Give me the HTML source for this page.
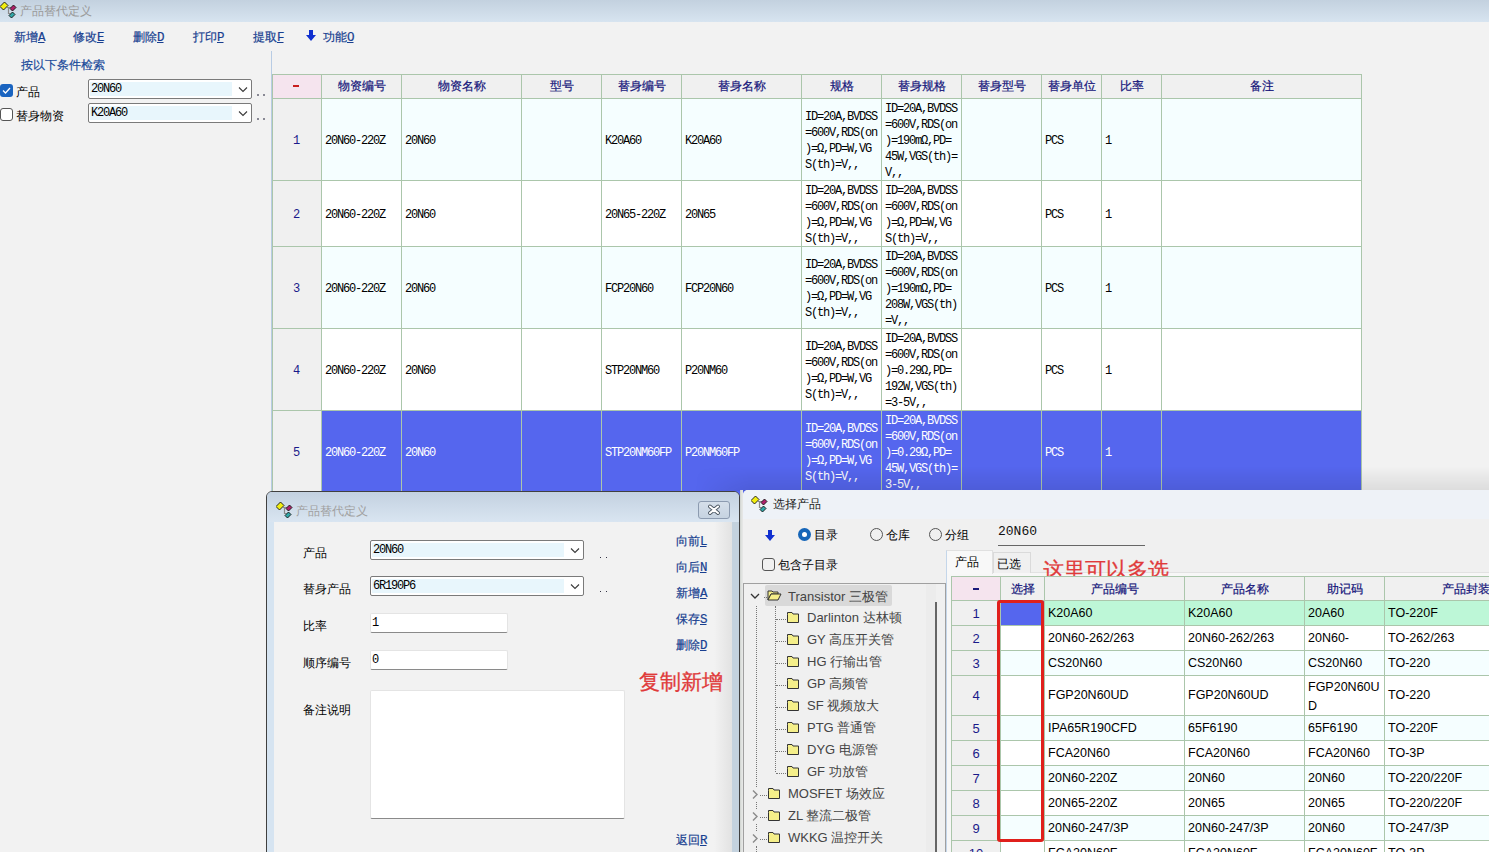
<!DOCTYPE html><html><head><meta charset="utf-8"><style>
html,body{margin:0;padding:0;}body{width:1489px;height:852px;overflow:hidden;position:relative;background:#f2f2f2;font-family:"Liberation Sans",sans-serif;font-size:12px;}
div{box-sizing:border-box;}
.m{font-family:"Liberation Mono",monospace;font-size:12px;letter-spacing:-1.2px;line-height:16px;color:#000;}
.u{text-decoration:underline;font-family:"Liberation Mono",monospace;font-size:12.5px;letter-spacing:-1px;}.lk{-webkit-text-stroke:0.25px;}i{font-style:normal;display:inline-block;width:1em;text-align:center;}
</style></head><body>
<div style="position:absolute;left:0px;top:0px;width:1489px;height:22px;background:linear-gradient(#c3d1df,#d7e4f0);"></div>
<svg style="position:absolute;left:0px;top:0px" width="17" height="19" viewBox="0 0 17 19">
<path d="M7 7.5 H11 M8.5 7.5 V13.5 H10.5" stroke="#8a8a8a" stroke-width="1.2" fill="none"/>
<polygon points="4.5,2 8,5.5 3.5,10 0,6.5" fill="#f2ee10" stroke="#111" stroke-width="0.9"/>
<polygon points="13.5,5 16,7.5 12.5,11 10,8.5" fill="#b0206a" stroke="#111" stroke-width="0.9"/>
<polygon points="12.5,12 15,14.5 11.5,18 9,15.5" fill="#30a8a8" stroke="#111" stroke-width="0.9"/>
</svg>
<div style="position:absolute;left:20px;top:3px;white-space:nowrap;font-size:12px;color:#9a9a9a;"><i>产</i><i>品</i><i>替</i><i>代</i><i>定</i><i>义</i></div>
<div style="position:absolute;left:14px;top:29px;white-space:nowrap;font-size:12px;color:#183f90;-webkit-text-stroke:0.2px;"><i>新</i><i>增</i><span class="u">A</span></div>
<div style="position:absolute;left:73px;top:29px;white-space:nowrap;font-size:12px;color:#183f90;-webkit-text-stroke:0.2px;"><i>修</i><i>改</i><span class="u">E</span></div>
<div style="position:absolute;left:133px;top:29px;white-space:nowrap;font-size:12px;color:#183f90;-webkit-text-stroke:0.2px;"><i>删</i><i>除</i><span class="u">D</span></div>
<div style="position:absolute;left:193px;top:29px;white-space:nowrap;font-size:12px;color:#183f90;-webkit-text-stroke:0.2px;"><i>打</i><i>印</i><span class="u">P</span></div>
<div style="position:absolute;left:253px;top:29px;white-space:nowrap;font-size:12px;color:#183f90;-webkit-text-stroke:0.2px;"><i>提</i><i>取</i><span class="u">F</span></div>
<div style="position:absolute;left:323px;top:29px;white-space:nowrap;font-size:12px;color:#183f90;-webkit-text-stroke:0.2px;"><i>功</i><i>能</i><span class="u">O</span></div>
<svg style="position:absolute;left:305px;top:29px" width="12" height="13" viewBox="0 0 12 13"><path d="M4 1 H8 V6 H11 L6 12 L1 6 H4 Z" fill="#1030d0"/></svg>
<div style="position:absolute;left:21px;top:57px;white-space:nowrap;font-size:12px;color:#1a4a9a;-webkit-text-stroke:0.2px;"><i>按</i><i>以</i><i>下</i><i>条</i><i>件</i><i>检</i><i>索</i></div>
<div style="position:absolute;left:0px;top:84px;width:13px;height:13px;background:#1a64c0;border-radius:3px;"></div>
<svg style="position:absolute;left:0px;top:84px" width="13" height="13" viewBox="0 0 13 13"><path d="M3 6.5 L5.5 9 L10 4" stroke="#fff" stroke-width="1.3" fill="none"/></svg>
<div style="position:absolute;left:16px;top:84px;white-space:nowrap;font-size:12px;color:#000;"><i>产</i><i>品</i></div>
<div style="position:absolute;left:0px;top:108px;width:13px;height:13px;border:1px solid #555;border-radius:3px;background:#fff;"></div>
<div style="position:absolute;left:16px;top:108px;white-space:nowrap;font-size:12px;color:#000;"><i>替</i><i>身</i><i>物</i><i>资</i></div>
<div style="position:absolute;left:88px;top:79px;width:164px;height:20px;background:#fff;border:1px solid #7a7a7a;border-radius:2px;"></div>
<div style="position:absolute;left:90px;top:82px;width:142px;height:14px;background:#e8f6fc;"></div>
<div style="position:absolute;left:91px;top:81px;white-space:nowrap;font-family:'Liberation Mono', monospace;font-size:12px;letter-spacing:-1.2px;line-height:16px;color:#000;">20N60</div>
<svg style="position:absolute;left:238px;top:86px" width="10" height="7" viewBox="0 0 10 7"><path d="M1 1.5 L5 5.5 L9 1.5" stroke="#3a3a3a" stroke-width="1.1" fill="none"/></svg>
<div style="position:absolute;left:88px;top:103px;width:164px;height:20px;background:#fff;border:1px solid #7a7a7a;border-radius:2px;"></div>
<div style="position:absolute;left:90px;top:106px;width:142px;height:14px;background:#e8f6fc;"></div>
<div style="position:absolute;left:91px;top:105px;white-space:nowrap;font-family:'Liberation Mono', monospace;font-size:12px;letter-spacing:-1.2px;line-height:16px;color:#000;">K20A60</div>
<svg style="position:absolute;left:238px;top:110px" width="10" height="7" viewBox="0 0 10 7"><path d="M1 1.5 L5 5.5 L9 1.5" stroke="#3a3a3a" stroke-width="1.1" fill="none"/></svg>
<div style="position:absolute;left:257px;top:94px;width:2px;height:2px;background:#445;border-radius:1px;opacity:.8"></div>
<div style="position:absolute;left:263px;top:94px;width:2px;height:2px;background:#445;border-radius:1px;opacity:.8"></div>
<div style="position:absolute;left:257px;top:118px;width:2px;height:2px;background:#445;border-radius:1px;opacity:.8"></div>
<div style="position:absolute;left:263px;top:118px;width:2px;height:2px;background:#445;border-radius:1px;opacity:.8"></div>
<div style="position:absolute;left:271px;top:51px;width:1px;height:801px;background:#b8cce4;"></div>
<div style="position:absolute;left:272px;top:74px;width:1090px;height:446px;background:#abc6ab;"></div>
<div style="position:absolute;left:273px;top:75px;width:48px;height:23px;background:#f5e4ee;color:#cc2020;text-align:center;line-height:23px;font-size:12px;-webkit-text-stroke:0.2px;"><div style="position:absolute;left:20px;top:10px;width:6px;height:2px;background:#c81e1e;"></div></div>
<div style="position:absolute;left:273px;top:99px;width:48px;height:81px;background:#f0f0f0;overflow:hidden;"><div style="position:absolute;left:0;right:0;top:34px;text-align:center;font-family:'Liberation Mono', monospace;font-size:12px;line-height:16px;color:#1a1a8a;padding-right:1px;">1</div></div>
<div style="position:absolute;left:273px;top:181px;width:48px;height:65px;background:#f0f0f0;overflow:hidden;"><div style="position:absolute;left:0;right:0;top:26px;text-align:center;font-family:'Liberation Mono', monospace;font-size:12px;line-height:16px;color:#1a1a8a;padding-right:1px;">2</div></div>
<div style="position:absolute;left:273px;top:247px;width:48px;height:81px;background:#f0f0f0;overflow:hidden;"><div style="position:absolute;left:0;right:0;top:34px;text-align:center;font-family:'Liberation Mono', monospace;font-size:12px;line-height:16px;color:#1a1a8a;padding-right:1px;">3</div></div>
<div style="position:absolute;left:273px;top:329px;width:48px;height:81px;background:#f0f0f0;overflow:hidden;"><div style="position:absolute;left:0;right:0;top:34px;text-align:center;font-family:'Liberation Mono', monospace;font-size:12px;line-height:16px;color:#1a1a8a;padding-right:1px;">4</div></div>
<div style="position:absolute;left:273px;top:411px;width:48px;height:109px;background:#f0f0f0;overflow:hidden;"><div style="position:absolute;left:0;right:0;top:34px;text-align:center;font-family:'Liberation Mono', monospace;font-size:12px;line-height:16px;color:#1a1a8a;padding-right:1px;">5</div></div>
<div style="position:absolute;left:322px;top:75px;width:79px;height:23px;background:#f0f0f0;color:#14147a;text-align:center;line-height:23px;font-size:12px;-webkit-text-stroke:0.2px;"><i>物</i><i>资</i><i>编</i><i>号</i></div>
<div style="position:absolute;left:322px;top:99px;width:79px;height:81px;background:#f5feff;overflow:hidden;"><div class="m" style="position:absolute;left:3px;top:34px;color:#000;">20N60-220Z</div></div>
<div style="position:absolute;left:322px;top:181px;width:79px;height:65px;background:#ffffff;overflow:hidden;"><div class="m" style="position:absolute;left:3px;top:26px;color:#000;">20N60-220Z</div></div>
<div style="position:absolute;left:322px;top:247px;width:79px;height:81px;background:#f5feff;overflow:hidden;"><div class="m" style="position:absolute;left:3px;top:34px;color:#000;">20N60-220Z</div></div>
<div style="position:absolute;left:322px;top:329px;width:79px;height:81px;background:#ffffff;overflow:hidden;"><div class="m" style="position:absolute;left:3px;top:34px;color:#000;">20N60-220Z</div></div>
<div style="position:absolute;left:322px;top:411px;width:79px;height:109px;background:#5566ee;overflow:hidden;"><div class="m" style="position:absolute;left:3px;top:34px;color:#ffffff;">20N60-220Z</div></div>
<div style="position:absolute;left:402px;top:75px;width:119px;height:23px;background:#f0f0f0;color:#14147a;text-align:center;line-height:23px;font-size:12px;-webkit-text-stroke:0.2px;"><i>物</i><i>资</i><i>名</i><i>称</i></div>
<div style="position:absolute;left:402px;top:99px;width:119px;height:81px;background:#f5feff;overflow:hidden;"><div class="m" style="position:absolute;left:3px;top:34px;color:#000;">20N60</div></div>
<div style="position:absolute;left:402px;top:181px;width:119px;height:65px;background:#ffffff;overflow:hidden;"><div class="m" style="position:absolute;left:3px;top:26px;color:#000;">20N60</div></div>
<div style="position:absolute;left:402px;top:247px;width:119px;height:81px;background:#f5feff;overflow:hidden;"><div class="m" style="position:absolute;left:3px;top:34px;color:#000;">20N60</div></div>
<div style="position:absolute;left:402px;top:329px;width:119px;height:81px;background:#ffffff;overflow:hidden;"><div class="m" style="position:absolute;left:3px;top:34px;color:#000;">20N60</div></div>
<div style="position:absolute;left:402px;top:411px;width:119px;height:109px;background:#5566ee;overflow:hidden;"><div class="m" style="position:absolute;left:3px;top:34px;color:#ffffff;">20N60</div></div>
<div style="position:absolute;left:522px;top:75px;width:79px;height:23px;background:#f0f0f0;color:#14147a;text-align:center;line-height:23px;font-size:12px;-webkit-text-stroke:0.2px;"><i>型</i><i>号</i></div>
<div style="position:absolute;left:522px;top:99px;width:79px;height:81px;background:#f5feff;overflow:hidden;"></div>
<div style="position:absolute;left:522px;top:181px;width:79px;height:65px;background:#ffffff;overflow:hidden;"></div>
<div style="position:absolute;left:522px;top:247px;width:79px;height:81px;background:#f5feff;overflow:hidden;"></div>
<div style="position:absolute;left:522px;top:329px;width:79px;height:81px;background:#ffffff;overflow:hidden;"></div>
<div style="position:absolute;left:522px;top:411px;width:79px;height:109px;background:#5566ee;overflow:hidden;"></div>
<div style="position:absolute;left:602px;top:75px;width:79px;height:23px;background:#f0f0f0;color:#14147a;text-align:center;line-height:23px;font-size:12px;-webkit-text-stroke:0.2px;"><i>替</i><i>身</i><i>编</i><i>号</i></div>
<div style="position:absolute;left:602px;top:99px;width:79px;height:81px;background:#f5feff;overflow:hidden;"><div class="m" style="position:absolute;left:3px;top:34px;color:#000;">K20A60</div></div>
<div style="position:absolute;left:602px;top:181px;width:79px;height:65px;background:#ffffff;overflow:hidden;"><div class="m" style="position:absolute;left:3px;top:26px;color:#000;">20N65-220Z</div></div>
<div style="position:absolute;left:602px;top:247px;width:79px;height:81px;background:#f5feff;overflow:hidden;"><div class="m" style="position:absolute;left:3px;top:34px;color:#000;">FCP20N60</div></div>
<div style="position:absolute;left:602px;top:329px;width:79px;height:81px;background:#ffffff;overflow:hidden;"><div class="m" style="position:absolute;left:3px;top:34px;color:#000;">STP20NM60</div></div>
<div style="position:absolute;left:602px;top:411px;width:79px;height:109px;background:#5566ee;overflow:hidden;"><div class="m" style="position:absolute;left:3px;top:34px;color:#ffffff;">STP20NM60FP</div></div>
<div style="position:absolute;left:682px;top:75px;width:119px;height:23px;background:#f0f0f0;color:#14147a;text-align:center;line-height:23px;font-size:12px;-webkit-text-stroke:0.2px;"><i>替</i><i>身</i><i>名</i><i>称</i></div>
<div style="position:absolute;left:682px;top:99px;width:119px;height:81px;background:#f5feff;overflow:hidden;"><div class="m" style="position:absolute;left:3px;top:34px;color:#000;">K20A60</div></div>
<div style="position:absolute;left:682px;top:181px;width:119px;height:65px;background:#ffffff;overflow:hidden;"><div class="m" style="position:absolute;left:3px;top:26px;color:#000;">20N65</div></div>
<div style="position:absolute;left:682px;top:247px;width:119px;height:81px;background:#f5feff;overflow:hidden;"><div class="m" style="position:absolute;left:3px;top:34px;color:#000;">FCP20N60</div></div>
<div style="position:absolute;left:682px;top:329px;width:119px;height:81px;background:#ffffff;overflow:hidden;"><div class="m" style="position:absolute;left:3px;top:34px;color:#000;">P20NM60</div></div>
<div style="position:absolute;left:682px;top:411px;width:119px;height:109px;background:#5566ee;overflow:hidden;"><div class="m" style="position:absolute;left:3px;top:34px;color:#ffffff;">P20NM60FP</div></div>
<div style="position:absolute;left:802px;top:75px;width:79px;height:23px;background:#f0f0f0;color:#14147a;text-align:center;line-height:23px;font-size:12px;-webkit-text-stroke:0.2px;"><i>规</i><i>格</i></div>
<div style="position:absolute;left:802px;top:99px;width:79px;height:81px;background:#f5feff;overflow:hidden;"><div class="m" style="position:absolute;left:3px;top:10px;color:#000;">ID=20A,BVDSS<br>=600V,RDS(on<br>)=Ω,PD=W,VG<br>S(th)=V,,</div></div>
<div style="position:absolute;left:802px;top:181px;width:79px;height:65px;background:#ffffff;overflow:hidden;"><div class="m" style="position:absolute;left:3px;top:2px;color:#000;">ID=20A,BVDSS<br>=600V,RDS(on<br>)=Ω,PD=W,VG<br>S(th)=V,,</div></div>
<div style="position:absolute;left:802px;top:247px;width:79px;height:81px;background:#f5feff;overflow:hidden;"><div class="m" style="position:absolute;left:3px;top:10px;color:#000;">ID=20A,BVDSS<br>=600V,RDS(on<br>)=Ω,PD=W,VG<br>S(th)=V,,</div></div>
<div style="position:absolute;left:802px;top:329px;width:79px;height:81px;background:#ffffff;overflow:hidden;"><div class="m" style="position:absolute;left:3px;top:10px;color:#000;">ID=20A,BVDSS<br>=600V,RDS(on<br>)=Ω,PD=W,VG<br>S(th)=V,,</div></div>
<div style="position:absolute;left:802px;top:411px;width:79px;height:109px;background:#5566ee;overflow:hidden;"><div class="m" style="position:absolute;left:3px;top:10px;color:#ffffff;">ID=20A,BVDSS<br>=600V,RDS(on<br>)=Ω,PD=W,VG<br>S(th)=V,,</div></div>
<div style="position:absolute;left:882px;top:75px;width:79px;height:23px;background:#f0f0f0;color:#14147a;text-align:center;line-height:23px;font-size:12px;-webkit-text-stroke:0.2px;"><i>替</i><i>身</i><i>规</i><i>格</i></div>
<div style="position:absolute;left:882px;top:99px;width:79px;height:81px;background:#f5feff;overflow:hidden;"><div class="m" style="position:absolute;left:3px;top:2px;color:#000;">ID=20A,BVDSS<br>=600V,RDS(on<br>)=190mΩ,PD=<br>45W,VGS(th)=<br>V,,</div></div>
<div style="position:absolute;left:882px;top:181px;width:79px;height:65px;background:#ffffff;overflow:hidden;"><div class="m" style="position:absolute;left:3px;top:2px;color:#000;">ID=20A,BVDSS<br>=600V,RDS(on<br>)=Ω,PD=W,VG<br>S(th)=V,,</div></div>
<div style="position:absolute;left:882px;top:247px;width:79px;height:81px;background:#f5feff;overflow:hidden;"><div class="m" style="position:absolute;left:3px;top:2px;color:#000;">ID=20A,BVDSS<br>=600V,RDS(on<br>)=190mΩ,PD=<br>208W,VGS(th)<br>=V,,</div></div>
<div style="position:absolute;left:882px;top:329px;width:79px;height:81px;background:#ffffff;overflow:hidden;"><div class="m" style="position:absolute;left:3px;top:2px;color:#000;">ID=20A,BVDSS<br>=600V,RDS(on<br>)=0.29Ω,PD=<br>192W,VGS(th)<br>=3-5V,,</div></div>
<div style="position:absolute;left:882px;top:411px;width:79px;height:109px;background:#5566ee;overflow:hidden;"><div class="m" style="position:absolute;left:3px;top:2px;color:#ffffff;">ID=20A,BVDSS<br>=600V,RDS(on<br>)=0.29Ω,PD=<br>45W,VGS(th)=<br>3-5V,,</div></div>
<div style="position:absolute;left:962px;top:75px;width:79px;height:23px;background:#f0f0f0;color:#14147a;text-align:center;line-height:23px;font-size:12px;-webkit-text-stroke:0.2px;"><i>替</i><i>身</i><i>型</i><i>号</i></div>
<div style="position:absolute;left:962px;top:99px;width:79px;height:81px;background:#f5feff;overflow:hidden;"></div>
<div style="position:absolute;left:962px;top:181px;width:79px;height:65px;background:#ffffff;overflow:hidden;"></div>
<div style="position:absolute;left:962px;top:247px;width:79px;height:81px;background:#f5feff;overflow:hidden;"></div>
<div style="position:absolute;left:962px;top:329px;width:79px;height:81px;background:#ffffff;overflow:hidden;"></div>
<div style="position:absolute;left:962px;top:411px;width:79px;height:109px;background:#5566ee;overflow:hidden;"></div>
<div style="position:absolute;left:1042px;top:75px;width:59px;height:23px;background:#f0f0f0;color:#14147a;text-align:center;line-height:23px;font-size:12px;-webkit-text-stroke:0.2px;"><i>替</i><i>身</i><i>单</i><i>位</i></div>
<div style="position:absolute;left:1042px;top:99px;width:59px;height:81px;background:#f5feff;overflow:hidden;"><div class="m" style="position:absolute;left:3px;top:34px;color:#000;">PCS</div></div>
<div style="position:absolute;left:1042px;top:181px;width:59px;height:65px;background:#ffffff;overflow:hidden;"><div class="m" style="position:absolute;left:3px;top:26px;color:#000;">PCS</div></div>
<div style="position:absolute;left:1042px;top:247px;width:59px;height:81px;background:#f5feff;overflow:hidden;"><div class="m" style="position:absolute;left:3px;top:34px;color:#000;">PCS</div></div>
<div style="position:absolute;left:1042px;top:329px;width:59px;height:81px;background:#ffffff;overflow:hidden;"><div class="m" style="position:absolute;left:3px;top:34px;color:#000;">PCS</div></div>
<div style="position:absolute;left:1042px;top:411px;width:59px;height:109px;background:#5566ee;overflow:hidden;"><div class="m" style="position:absolute;left:3px;top:34px;color:#ffffff;">PCS</div></div>
<div style="position:absolute;left:1102px;top:75px;width:59px;height:23px;background:#f0f0f0;color:#14147a;text-align:center;line-height:23px;font-size:12px;-webkit-text-stroke:0.2px;"><i>比</i><i>率</i></div>
<div style="position:absolute;left:1102px;top:99px;width:59px;height:81px;background:#f5feff;overflow:hidden;"><div class="m" style="position:absolute;left:3px;top:34px;color:#000;">1</div></div>
<div style="position:absolute;left:1102px;top:181px;width:59px;height:65px;background:#ffffff;overflow:hidden;"><div class="m" style="position:absolute;left:3px;top:26px;color:#000;">1</div></div>
<div style="position:absolute;left:1102px;top:247px;width:59px;height:81px;background:#f5feff;overflow:hidden;"><div class="m" style="position:absolute;left:3px;top:34px;color:#000;">1</div></div>
<div style="position:absolute;left:1102px;top:329px;width:59px;height:81px;background:#ffffff;overflow:hidden;"><div class="m" style="position:absolute;left:3px;top:34px;color:#000;">1</div></div>
<div style="position:absolute;left:1102px;top:411px;width:59px;height:109px;background:#5566ee;overflow:hidden;"><div class="m" style="position:absolute;left:3px;top:34px;color:#ffffff;">1</div></div>
<div style="position:absolute;left:1162px;top:75px;width:199px;height:23px;background:#f0f0f0;color:#14147a;text-align:center;line-height:23px;font-size:12px;-webkit-text-stroke:0.2px;"><i>备</i><i>注</i></div>
<div style="position:absolute;left:1162px;top:99px;width:199px;height:81px;background:#f5feff;overflow:hidden;"></div>
<div style="position:absolute;left:1162px;top:181px;width:199px;height:65px;background:#ffffff;overflow:hidden;"></div>
<div style="position:absolute;left:1162px;top:247px;width:199px;height:81px;background:#f5feff;overflow:hidden;"></div>
<div style="position:absolute;left:1162px;top:329px;width:199px;height:81px;background:#ffffff;overflow:hidden;"></div>
<div style="position:absolute;left:1162px;top:411px;width:199px;height:109px;background:#5566ee;overflow:hidden;"></div>
<div style="position:absolute;left:695px;top:466px;width:794px;height:25px;background:linear-gradient(rgba(0,0,0,0),rgba(0,0,0,0.09));-webkit-mask-image:linear-gradient(90deg,transparent 0,#000 55px);mask-image:linear-gradient(90deg,transparent 0,#000 55px);"></div>
<div style="position:absolute;left:266px;top:491px;width:474px;height:400px;background:#d6e4f1;border:1px solid #404040;border-radius:6px 6px 0 0;"></div>
<div style="position:absolute;left:267px;top:492px;width:472px;height:30px;background:linear-gradient(#c3d1e0,#d9e5f1);border-radius:5px 5px 0 0;"></div>
<div style="position:absolute;left:732px;top:522px;width:7px;height:340px;background:#c4d2de;"></div>
<div style="position:absolute;left:274px;top:522px;width:458px;height:340px;background:linear-gradient(90deg,#f2f2f2 0,#f2f2f2 440px,#e2e2e2 458px);"></div>
<svg style="position:absolute;left:276px;top:500px" width="17" height="19" viewBox="0 0 17 19">
<path d="M7 7.5 H11 M8.5 7.5 V13.5 H10.5" stroke="#8a8a8a" stroke-width="1.2" fill="none"/>
<polygon points="4.5,2 8,5.5 3.5,10 0,6.5" fill="#f2ee10" stroke="#111" stroke-width="0.9"/>
<polygon points="13.5,5 16,7.5 12.5,11 10,8.5" fill="#b0206a" stroke="#111" stroke-width="0.9"/>
<polygon points="12.5,12 15,14.5 11.5,18 9,15.5" fill="#30a8a8" stroke="#111" stroke-width="0.9"/>
</svg>
<div style="position:absolute;left:296px;top:503px;white-space:nowrap;font-size:12px;color:#a0a0a0;"><i>产</i><i>品</i><i>替</i><i>代</i><i>定</i><i>义</i></div>
<div style="position:absolute;left:698px;top:501px;width:32px;height:18px;border:1px solid #8c9bb0;border-radius:3px;background:linear-gradient(#d5dfea,#c6d3e1);"></div>
<svg style="position:absolute;left:706px;top:503px" width="16" height="13" viewBox="0 0 16 13"><path d="M4 3.5 L12 10 M12 3.5 L4 10" stroke="#4a5560" stroke-width="3.8" stroke-linecap="round"/><path d="M4 3.5 L12 10 M12 3.5 L4 10" stroke="#fff" stroke-width="2" stroke-linecap="round"/></svg>
<div style="position:absolute;left:303px;top:545px;white-space:nowrap;font-size:12px;color:#000;"><i>产</i><i>品</i></div>
<div style="position:absolute;left:303px;top:581px;white-space:nowrap;font-size:12px;color:#000;"><i>替</i><i>身</i><i>产</i><i>品</i></div>
<div style="position:absolute;left:303px;top:618px;white-space:nowrap;font-size:12px;color:#000;"><i>比</i><i>率</i></div>
<div style="position:absolute;left:303px;top:655px;white-space:nowrap;font-size:12px;color:#000;"><i>顺</i><i>序</i><i>编</i><i>号</i></div>
<div style="position:absolute;left:303px;top:702px;white-space:nowrap;font-size:12px;color:#000;"><i>备</i><i>注</i><i>说</i><i>明</i></div>
<div style="position:absolute;left:370px;top:540px;width:214px;height:20px;background:#fff;border:1px solid #7a7a7a;border-radius:2px;"></div>
<div style="position:absolute;left:372px;top:543px;width:192px;height:14px;background:#e8f6fc;"></div>
<div style="position:absolute;left:373px;top:542px;white-space:nowrap;font-family:'Liberation Mono', monospace;font-size:12px;letter-spacing:-1.2px;line-height:16px;color:#000;">20N60</div>
<svg style="position:absolute;left:570px;top:547px" width="10" height="7" viewBox="0 0 10 7"><path d="M1 1.5 L5 5.5 L9 1.5" stroke="#3a3a3a" stroke-width="1.1" fill="none"/></svg>
<div style="position:absolute;left:370px;top:576px;width:214px;height:20px;background:#fff;border:1px solid #7a7a7a;border-radius:2px;"></div>
<div style="position:absolute;left:372px;top:579px;width:192px;height:14px;background:#e8f6fc;"></div>
<div style="position:absolute;left:373px;top:578px;white-space:nowrap;font-family:'Liberation Mono', monospace;font-size:12px;letter-spacing:-1.2px;line-height:16px;color:#000;">6R190P6</div>
<svg style="position:absolute;left:570px;top:583px" width="10" height="7" viewBox="0 0 10 7"><path d="M1 1.5 L5 5.5 L9 1.5" stroke="#3a3a3a" stroke-width="1.1" fill="none"/></svg>
<div style="position:absolute;left:600px;top:557px;width:1px;height:1px;background:#334;"></div>
<div style="position:absolute;left:606px;top:557px;width:1px;height:1px;background:#334;"></div>
<div style="position:absolute;left:600px;top:591px;width:1px;height:1px;background:#334;"></div>
<div style="position:absolute;left:606px;top:591px;width:1px;height:1px;background:#334;"></div>
<div style="position:absolute;left:370px;top:613px;width:138px;height:20px;background:#fff;border:1px solid #e4e4e4;border-bottom:1px solid #8a8a8a;border-radius:2px;"></div>
<div style="position:absolute;left:372px;top:615px;white-space:nowrap;font-family:'Liberation Mono', monospace;font-size:12px;letter-spacing:-1.2px;line-height:16px;color:#000;">1</div>
<div style="position:absolute;left:370px;top:650px;width:138px;height:20px;background:#fff;border:1px solid #e4e4e4;border-bottom:1px solid #8a8a8a;border-radius:2px;"></div>
<div style="position:absolute;left:372px;top:652px;white-space:nowrap;font-family:'Liberation Mono', monospace;font-size:12px;letter-spacing:-1.2px;line-height:16px;color:#000;">0</div>
<div style="position:absolute;left:370px;top:690px;width:255px;height:129px;background:#fff;border:1px solid #e4e4e4;border-bottom:1px solid #8a8a8a;border-radius:2px;"></div>
<div style="position:absolute;left:676px;top:533px;white-space:nowrap;font-size:12px;color:#183f90;-webkit-text-stroke:0.2px;"><i>向</i><i>前</i><span class="u">L</span></div>
<div style="position:absolute;left:676px;top:559px;white-space:nowrap;font-size:12px;color:#183f90;-webkit-text-stroke:0.2px;"><i>向</i><i>后</i><span class="u">N</span></div>
<div style="position:absolute;left:676px;top:585px;white-space:nowrap;font-size:12px;color:#183f90;-webkit-text-stroke:0.2px;"><i>新</i><i>增</i><span class="u">A</span></div>
<div style="position:absolute;left:676px;top:611px;white-space:nowrap;font-size:12px;color:#183f90;-webkit-text-stroke:0.2px;"><i>保</i><i>存</i><span class="u">S</span></div>
<div style="position:absolute;left:676px;top:637px;white-space:nowrap;font-size:12px;color:#183f90;-webkit-text-stroke:0.2px;"><i>删</i><i>除</i><span class="u">D</span></div>
<div style="position:absolute;left:676px;top:832px;white-space:nowrap;font-size:12px;color:#183f90;-webkit-text-stroke:0.2px;"><i>返</i><i>回</i><span class="u">R</span></div>
<div style="position:absolute;left:639px;top:668px;white-space:nowrap;font-size:21px;color:#e03a3a;-webkit-text-stroke:0.3px;"><i>复</i><i>制</i><i>新</i><i>增</i></div>
<div style="position:absolute;left:740px;top:490px;width:3px;height:400px;background:linear-gradient(90deg,#cfd2cf,#dfe2df,#e8e8e8);"></div>
<div style="position:absolute;left:743px;top:490px;width:760px;height:400px;background:#f0f0f0;border-radius:5px 0 0 0;"></div>
<div style="position:absolute;left:743px;top:490px;width:760px;height:29px;background:#eef2f7;border-radius:5px 0 0 0;"></div>
<svg style="position:absolute;left:751px;top:494px" width="17" height="19" viewBox="0 0 17 19">
<path d="M7 7.5 H11 M8.5 7.5 V13.5 H10.5" stroke="#8a8a8a" stroke-width="1.2" fill="none"/>
<polygon points="4.5,2 8,5.5 3.5,10 0,6.5" fill="#f2ee10" stroke="#111" stroke-width="0.9"/>
<polygon points="13.5,5 16,7.5 12.5,11 10,8.5" fill="#b0206a" stroke="#111" stroke-width="0.9"/>
<polygon points="12.5,12 15,14.5 11.5,18 9,15.5" fill="#30a8a8" stroke="#111" stroke-width="0.9"/>
</svg>
<div style="position:absolute;left:773px;top:496px;white-space:nowrap;font-size:12px;color:#1a1a1a;"><i>选</i><i>择</i><i>产</i><i>品</i></div>
<svg style="position:absolute;left:764px;top:529px" width="12" height="13" viewBox="0 0 12 13"><path d="M4 1 H8 V6 H11 L6 12 L1 6 H4 Z" fill="#1030d0"/></svg>
<div style="position:absolute;left:798px;top:528px;width:13px;height:13px;border-radius:50%;background:#1565b8;"></div>
<div style="position:absolute;left:802px;top:532px;width:5px;height:5px;border-radius:50%;background:#fff;"></div>
<div style="position:absolute;left:814px;top:527px;white-space:nowrap;font-size:12px;color:#000;"><i>目</i><i>录</i></div>
<div style="position:absolute;left:870px;top:528px;width:13px;height:13px;border-radius:50%;border:1px solid #555;"></div>
<div style="position:absolute;left:886px;top:527px;white-space:nowrap;font-size:12px;color:#000;"><i>仓</i><i>库</i></div>
<div style="position:absolute;left:929px;top:528px;width:13px;height:13px;border-radius:50%;border:1px solid #555;"></div>
<div style="position:absolute;left:945px;top:527px;white-space:nowrap;font-size:12px;color:#000;"><i>分</i><i>组</i></div>
<div style="position:absolute;left:998px;top:524px;white-space:nowrap;font-family:'Liberation Mono', monospace;font-size:13px;letter-spacing:0px;color:#111;">20N60</div>
<div style="position:absolute;left:998px;top:545px;width:147px;height:1px;background:#666;"></div>
<div style="position:absolute;left:762px;top:558px;width:13px;height:13px;border:1px solid #555;border-radius:3px;"></div>
<div style="position:absolute;left:778px;top:557px;white-space:nowrap;font-size:12px;color:#000;"><i>包</i><i>含</i><i>子</i><i>目</i><i>录</i></div>
<div style="position:absolute;left:743px;top:583px;width:203px;height:300px;border:1px solid #a0a0a0;background:#f0f0f0;"></div>
<div style="position:absolute;left:926px;top:584px;width:10px;height:300px;background:#ececec;"></div>
<div style="position:absolute;left:935px;top:602px;width:2px;height:260px;background:#666;"></div>
<div style="position:absolute;left:765px;top:585px;width:127px;height:21px;background:#d9d9d9;border-radius:2px;"></div>
<svg style="position:absolute;left:750px;top:593px" width="10" height="7" viewBox="0 0 10 7"><path d="M1 1 L5 5 L9 1" stroke="#333" stroke-width="1.3" fill="none"/></svg>
<svg style="position:absolute;left:767px;top:589px" width="15" height="12" viewBox="0 0 15 12"><path d="M1 2 H5 L6 3 H11 V5 H4 L1 11 Z" fill="#f5ef8a" stroke="#333" stroke-width="1"/><path d="M4 5 H14 L11 11 H1 Z" fill="#f5ef8a" stroke="#333" stroke-width="1"/></svg>
<div style="position:absolute;left:788px;top:588px;white-space:nowrap;font-size:13px;color:#444;">Transistor <i>三</i><i>极</i><i>管</i></div>
<div style="position:absolute;left:756px;top:606px;width:1px;height:181px;border-left:1px dotted #777;"></div>
<div style="position:absolute;left:756px;top:802px;width:1px;height:7px;border-left:1px dotted #777;"></div>
<div style="position:absolute;left:756px;top:824px;width:1px;height:7px;border-left:1px dotted #777;"></div>
<div style="position:absolute;left:756px;top:846px;width:1px;height:6px;border-left:1px dotted #777;"></div>
<div style="position:absolute;left:775px;top:606px;width:1px;height:166px;border-left:1px dotted #777;"></div>
<div style="position:absolute;left:776px;top:619px;width:10px;height:1px;border-top:1px dotted #777;"></div>
<svg style="position:absolute;left:786px;top:611px" width="14" height="13" viewBox="0 0 14 13"><path d="M1.5 3.5 V1.5 H6 L7 3 H12.5 V11.5 H1.5 Z" fill="#f5ef8a" stroke="#333" stroke-width="1"/></svg>
<div style="position:absolute;left:807px;top:609px;white-space:nowrap;font-size:13px;color:#444;">Darlinton <i>达</i><i>林</i><i>顿</i></div>
<div style="position:absolute;left:776px;top:641px;width:10px;height:1px;border-top:1px dotted #777;"></div>
<svg style="position:absolute;left:786px;top:633px" width="14" height="13" viewBox="0 0 14 13"><path d="M1.5 3.5 V1.5 H6 L7 3 H12.5 V11.5 H1.5 Z" fill="#f5ef8a" stroke="#333" stroke-width="1"/></svg>
<div style="position:absolute;left:807px;top:631px;white-space:nowrap;font-size:13px;color:#444;">GY <i>高</i><i>压</i><i>开</i><i>关</i><i>管</i></div>
<div style="position:absolute;left:776px;top:663px;width:10px;height:1px;border-top:1px dotted #777;"></div>
<svg style="position:absolute;left:786px;top:655px" width="14" height="13" viewBox="0 0 14 13"><path d="M1.5 3.5 V1.5 H6 L7 3 H12.5 V11.5 H1.5 Z" fill="#f5ef8a" stroke="#333" stroke-width="1"/></svg>
<div style="position:absolute;left:807px;top:653px;white-space:nowrap;font-size:13px;color:#444;">HG <i>行</i><i>输</i><i>出</i><i>管</i></div>
<div style="position:absolute;left:776px;top:685px;width:10px;height:1px;border-top:1px dotted #777;"></div>
<svg style="position:absolute;left:786px;top:677px" width="14" height="13" viewBox="0 0 14 13"><path d="M1.5 3.5 V1.5 H6 L7 3 H12.5 V11.5 H1.5 Z" fill="#f5ef8a" stroke="#333" stroke-width="1"/></svg>
<div style="position:absolute;left:807px;top:675px;white-space:nowrap;font-size:13px;color:#444;">GP <i>高</i><i>频</i><i>管</i></div>
<div style="position:absolute;left:776px;top:707px;width:10px;height:1px;border-top:1px dotted #777;"></div>
<svg style="position:absolute;left:786px;top:699px" width="14" height="13" viewBox="0 0 14 13"><path d="M1.5 3.5 V1.5 H6 L7 3 H12.5 V11.5 H1.5 Z" fill="#f5ef8a" stroke="#333" stroke-width="1"/></svg>
<div style="position:absolute;left:807px;top:697px;white-space:nowrap;font-size:13px;color:#444;">SF <i>视</i><i>频</i><i>放</i><i>大</i></div>
<div style="position:absolute;left:776px;top:729px;width:10px;height:1px;border-top:1px dotted #777;"></div>
<svg style="position:absolute;left:786px;top:721px" width="14" height="13" viewBox="0 0 14 13"><path d="M1.5 3.5 V1.5 H6 L7 3 H12.5 V11.5 H1.5 Z" fill="#f5ef8a" stroke="#333" stroke-width="1"/></svg>
<div style="position:absolute;left:807px;top:719px;white-space:nowrap;font-size:13px;color:#444;">PTG <i>普</i><i>通</i><i>管</i></div>
<div style="position:absolute;left:776px;top:751px;width:10px;height:1px;border-top:1px dotted #777;"></div>
<svg style="position:absolute;left:786px;top:743px" width="14" height="13" viewBox="0 0 14 13"><path d="M1.5 3.5 V1.5 H6 L7 3 H12.5 V11.5 H1.5 Z" fill="#f5ef8a" stroke="#333" stroke-width="1"/></svg>
<div style="position:absolute;left:807px;top:741px;white-space:nowrap;font-size:13px;color:#444;">DYG <i>电</i><i>源</i><i>管</i></div>
<div style="position:absolute;left:776px;top:773px;width:10px;height:1px;border-top:1px dotted #777;"></div>
<svg style="position:absolute;left:786px;top:765px" width="14" height="13" viewBox="0 0 14 13"><path d="M1.5 3.5 V1.5 H6 L7 3 H12.5 V11.5 H1.5 Z" fill="#f5ef8a" stroke="#333" stroke-width="1"/></svg>
<div style="position:absolute;left:807px;top:763px;white-space:nowrap;font-size:13px;color:#444;">GF <i>功</i><i>放</i><i>管</i></div>
<svg style="position:absolute;left:751px;top:789px" width="8" height="11" viewBox="0 0 8 11"><path d="M2 1.5 L6 5.5 L2 9.5" stroke="#8a8a8a" stroke-width="1.4" fill="none"/></svg>
<div style="position:absolute;left:760px;top:795px;width:7px;height:1px;border-top:1px dotted #777;"></div>
<svg style="position:absolute;left:767px;top:787px" width="14" height="13" viewBox="0 0 14 13"><path d="M1.5 3.5 V1.5 H6 L7 3 H12.5 V11.5 H1.5 Z" fill="#f5ef8a" stroke="#333" stroke-width="1"/></svg>
<div style="position:absolute;left:788px;top:785px;white-space:nowrap;font-size:13px;color:#444;">MOSFET <i>场</i><i>效</i><i>应</i></div>
<svg style="position:absolute;left:751px;top:811px" width="8" height="11" viewBox="0 0 8 11"><path d="M2 1.5 L6 5.5 L2 9.5" stroke="#8a8a8a" stroke-width="1.4" fill="none"/></svg>
<div style="position:absolute;left:760px;top:817px;width:7px;height:1px;border-top:1px dotted #777;"></div>
<svg style="position:absolute;left:767px;top:809px" width="14" height="13" viewBox="0 0 14 13"><path d="M1.5 3.5 V1.5 H6 L7 3 H12.5 V11.5 H1.5 Z" fill="#f5ef8a" stroke="#333" stroke-width="1"/></svg>
<div style="position:absolute;left:788px;top:807px;white-space:nowrap;font-size:13px;color:#444;">ZL <i>整</i><i>流</i><i>二</i><i>极</i><i>管</i></div>
<svg style="position:absolute;left:751px;top:833px" width="8" height="11" viewBox="0 0 8 11"><path d="M2 1.5 L6 5.5 L2 9.5" stroke="#8a8a8a" stroke-width="1.4" fill="none"/></svg>
<div style="position:absolute;left:760px;top:839px;width:7px;height:1px;border-top:1px dotted #777;"></div>
<svg style="position:absolute;left:767px;top:831px" width="14" height="13" viewBox="0 0 14 13"><path d="M1.5 3.5 V1.5 H6 L7 3 H12.5 V11.5 H1.5 Z" fill="#f5ef8a" stroke="#333" stroke-width="1"/></svg>
<div style="position:absolute;left:788px;top:829px;white-space:nowrap;font-size:13px;color:#444;">WKKG <i>温</i><i>控</i><i>开</i><i>关</i></div>
<div style="position:absolute;left:764px;top:597px;width:3px;height:1px;border-top:1px dotted #777;"></div>
<div style="position:absolute;left:946px;top:572px;width:560px;height:300px;background:#f7f7f7;border-top:1px solid #e2e2e2;border-left:1px solid #c4d6ea;"></div>
<div style="position:absolute;left:993px;top:552px;width:38px;height:21px;background:#f0f0f0;border:1px solid #dadada;border-bottom:none;"></div>
<div style="position:absolute;left:997px;top:556px;white-space:nowrap;font-size:12px;color:#000;"><i>已</i><i>选</i></div>
<div style="position:absolute;left:946px;top:550px;width:47px;height:24px;background:#f8f8f8;border:1px solid #e0e0e0;border-left:1px solid #c4d6ea;border-bottom:none;"></div>
<div style="position:absolute;left:955px;top:554px;white-space:nowrap;font-size:12px;color:#000;"><i>产</i><i>品</i></div>
<div style="position:absolute;left:1043px;top:556px;white-space:nowrap;font-size:21px;color:#e03a3a;-webkit-text-stroke:0.3px;"><i>这</i><i>里</i><i>可</i><i>以</i><i>多</i><i>选</i></div>
<div style="position:absolute;left:951px;top:576px;width:600px;height:300px;background:#abc6ab;"></div>
<div style="position:absolute;left:952px;top:866px;width:600px;height:10px;background:#fff;"></div>
<div style="position:absolute;left:952px;top:577px;width:48px;height:23px;background:#f5e4ee;color:#14147a;font-size:12px;line-height:25px;-webkit-text-stroke:0.2px;text-align:center;"><div style="position:absolute;left:21px;top:11px;width:6px;height:2px;background:#1a1a7a;"></div></div>
<div style="position:absolute;left:952px;top:601px;width:48px;height:24px;background:#f0f0f0;overflow:hidden;"><div style="position:absolute;left:0;right:0;top:5px;text-align:center;font-size:13px;color:#1a1a8a;">1</div></div>
<div style="position:absolute;left:952px;top:626px;width:48px;height:24px;background:#f0f0f0;overflow:hidden;"><div style="position:absolute;left:0;right:0;top:5px;text-align:center;font-size:13px;color:#1a1a8a;">2</div></div>
<div style="position:absolute;left:952px;top:651px;width:48px;height:24px;background:#f0f0f0;overflow:hidden;"><div style="position:absolute;left:0;right:0;top:5px;text-align:center;font-size:13px;color:#1a1a8a;">3</div></div>
<div style="position:absolute;left:952px;top:676px;width:48px;height:39px;background:#f0f0f0;overflow:hidden;"><div style="position:absolute;left:0;right:0;top:12px;text-align:center;font-size:13px;color:#1a1a8a;">4</div></div>
<div style="position:absolute;left:952px;top:716px;width:48px;height:24px;background:#f0f0f0;overflow:hidden;"><div style="position:absolute;left:0;right:0;top:5px;text-align:center;font-size:13px;color:#1a1a8a;">5</div></div>
<div style="position:absolute;left:952px;top:741px;width:48px;height:24px;background:#f0f0f0;overflow:hidden;"><div style="position:absolute;left:0;right:0;top:5px;text-align:center;font-size:13px;color:#1a1a8a;">6</div></div>
<div style="position:absolute;left:952px;top:766px;width:48px;height:24px;background:#f0f0f0;overflow:hidden;"><div style="position:absolute;left:0;right:0;top:5px;text-align:center;font-size:13px;color:#1a1a8a;">7</div></div>
<div style="position:absolute;left:952px;top:791px;width:48px;height:24px;background:#f0f0f0;overflow:hidden;"><div style="position:absolute;left:0;right:0;top:5px;text-align:center;font-size:13px;color:#1a1a8a;">8</div></div>
<div style="position:absolute;left:952px;top:816px;width:48px;height:24px;background:#f0f0f0;overflow:hidden;"><div style="position:absolute;left:0;right:0;top:5px;text-align:center;font-size:13px;color:#1a1a8a;">9</div></div>
<div style="position:absolute;left:952px;top:841px;width:48px;height:24px;background:#f0f0f0;overflow:hidden;"><div style="position:absolute;left:0;right:0;top:5px;text-align:center;font-size:13px;color:#1a1a8a;">10</div></div>
<div style="position:absolute;left:1001px;top:577px;width:43px;height:23px;background:#f0f0f0;color:#14147a;font-size:12px;line-height:25px;-webkit-text-stroke:0.2px;text-align:center;"><i>选</i><i>择</i></div>
<div style="position:absolute;left:1001px;top:601px;width:43px;height:24px;background:#5566ee;overflow:hidden;"></div>
<div style="position:absolute;left:1001px;top:626px;width:43px;height:24px;background:#ffffff;overflow:hidden;"></div>
<div style="position:absolute;left:1001px;top:651px;width:43px;height:24px;background:#f5feff;overflow:hidden;"></div>
<div style="position:absolute;left:1001px;top:676px;width:43px;height:39px;background:#ffffff;overflow:hidden;"></div>
<div style="position:absolute;left:1001px;top:716px;width:43px;height:24px;background:#f5feff;overflow:hidden;"></div>
<div style="position:absolute;left:1001px;top:741px;width:43px;height:24px;background:#ffffff;overflow:hidden;"></div>
<div style="position:absolute;left:1001px;top:766px;width:43px;height:24px;background:#f5feff;overflow:hidden;"></div>
<div style="position:absolute;left:1001px;top:791px;width:43px;height:24px;background:#ffffff;overflow:hidden;"></div>
<div style="position:absolute;left:1001px;top:816px;width:43px;height:24px;background:#f5feff;overflow:hidden;"></div>
<div style="position:absolute;left:1001px;top:841px;width:43px;height:24px;background:#ffffff;overflow:hidden;"></div>
<div style="position:absolute;left:1045px;top:577px;width:139px;height:23px;background:#f0f0f0;color:#14147a;font-size:12px;line-height:25px;-webkit-text-stroke:0.2px;text-align:center;"><i>产</i><i>品</i><i>编</i><i>号</i></div>
<div style="position:absolute;left:1045px;top:601px;width:139px;height:24px;background:#bdf7d7;overflow:hidden;"><div style="position:absolute;left:3px;top:5px;font-size:12.5px;color:#000;white-space:nowrap;">K20A60</div></div>
<div style="position:absolute;left:1045px;top:626px;width:139px;height:24px;background:#ffffff;overflow:hidden;"><div style="position:absolute;left:3px;top:5px;font-size:12.5px;color:#000;white-space:nowrap;">20N60-262/263</div></div>
<div style="position:absolute;left:1045px;top:651px;width:139px;height:24px;background:#f5feff;overflow:hidden;"><div style="position:absolute;left:3px;top:5px;font-size:12.5px;color:#000;white-space:nowrap;">CS20N60</div></div>
<div style="position:absolute;left:1045px;top:676px;width:139px;height:39px;background:#ffffff;overflow:hidden;"><div style="position:absolute;left:3px;top:12px;font-size:12.5px;color:#000;white-space:nowrap;">FGP20N60UD</div></div>
<div style="position:absolute;left:1045px;top:716px;width:139px;height:24px;background:#f5feff;overflow:hidden;"><div style="position:absolute;left:3px;top:5px;font-size:12.5px;color:#000;white-space:nowrap;">IPA65R190CFD</div></div>
<div style="position:absolute;left:1045px;top:741px;width:139px;height:24px;background:#ffffff;overflow:hidden;"><div style="position:absolute;left:3px;top:5px;font-size:12.5px;color:#000;white-space:nowrap;">FCA20N60</div></div>
<div style="position:absolute;left:1045px;top:766px;width:139px;height:24px;background:#f5feff;overflow:hidden;"><div style="position:absolute;left:3px;top:5px;font-size:12.5px;color:#000;white-space:nowrap;">20N60-220Z</div></div>
<div style="position:absolute;left:1045px;top:791px;width:139px;height:24px;background:#ffffff;overflow:hidden;"><div style="position:absolute;left:3px;top:5px;font-size:12.5px;color:#000;white-space:nowrap;">20N65-220Z</div></div>
<div style="position:absolute;left:1045px;top:816px;width:139px;height:24px;background:#f5feff;overflow:hidden;"><div style="position:absolute;left:3px;top:5px;font-size:12.5px;color:#000;white-space:nowrap;">20N60-247/3P</div></div>
<div style="position:absolute;left:1045px;top:841px;width:139px;height:24px;background:#ffffff;overflow:hidden;"><div style="position:absolute;left:3px;top:5px;font-size:12.5px;color:#000;white-space:nowrap;">FCA20N60F</div></div>
<div style="position:absolute;left:1185px;top:577px;width:119px;height:23px;background:#f0f0f0;color:#14147a;font-size:12px;line-height:25px;-webkit-text-stroke:0.2px;text-align:center;"><i>产</i><i>品</i><i>名</i><i>称</i></div>
<div style="position:absolute;left:1185px;top:601px;width:119px;height:24px;background:#bdf7d7;overflow:hidden;"><div style="position:absolute;left:3px;top:5px;font-size:12.5px;color:#000;white-space:nowrap;">K20A60</div></div>
<div style="position:absolute;left:1185px;top:626px;width:119px;height:24px;background:#ffffff;overflow:hidden;"><div style="position:absolute;left:3px;top:5px;font-size:12.5px;color:#000;white-space:nowrap;">20N60-262/263</div></div>
<div style="position:absolute;left:1185px;top:651px;width:119px;height:24px;background:#f5feff;overflow:hidden;"><div style="position:absolute;left:3px;top:5px;font-size:12.5px;color:#000;white-space:nowrap;">CS20N60</div></div>
<div style="position:absolute;left:1185px;top:676px;width:119px;height:39px;background:#ffffff;overflow:hidden;"><div style="position:absolute;left:3px;top:12px;font-size:12.5px;color:#000;white-space:nowrap;">FGP20N60UD</div></div>
<div style="position:absolute;left:1185px;top:716px;width:119px;height:24px;background:#f5feff;overflow:hidden;"><div style="position:absolute;left:3px;top:5px;font-size:12.5px;color:#000;white-space:nowrap;">65F6190</div></div>
<div style="position:absolute;left:1185px;top:741px;width:119px;height:24px;background:#ffffff;overflow:hidden;"><div style="position:absolute;left:3px;top:5px;font-size:12.5px;color:#000;white-space:nowrap;">FCA20N60</div></div>
<div style="position:absolute;left:1185px;top:766px;width:119px;height:24px;background:#f5feff;overflow:hidden;"><div style="position:absolute;left:3px;top:5px;font-size:12.5px;color:#000;white-space:nowrap;">20N60</div></div>
<div style="position:absolute;left:1185px;top:791px;width:119px;height:24px;background:#ffffff;overflow:hidden;"><div style="position:absolute;left:3px;top:5px;font-size:12.5px;color:#000;white-space:nowrap;">20N65</div></div>
<div style="position:absolute;left:1185px;top:816px;width:119px;height:24px;background:#f5feff;overflow:hidden;"><div style="position:absolute;left:3px;top:5px;font-size:12.5px;color:#000;white-space:nowrap;">20N60-247/3P</div></div>
<div style="position:absolute;left:1185px;top:841px;width:119px;height:24px;background:#ffffff;overflow:hidden;"><div style="position:absolute;left:3px;top:5px;font-size:12.5px;color:#000;white-space:nowrap;">FCA20N60F</div></div>
<div style="position:absolute;left:1305px;top:577px;width:79px;height:23px;background:#f0f0f0;color:#14147a;font-size:12px;line-height:25px;-webkit-text-stroke:0.2px;text-align:center;"><i>助</i><i>记</i><i>码</i></div>
<div style="position:absolute;left:1305px;top:601px;width:79px;height:24px;background:#bdf7d7;overflow:hidden;"><div style="position:absolute;left:3px;top:5px;font-size:12.5px;color:#000;white-space:nowrap;">20A60</div></div>
<div style="position:absolute;left:1305px;top:626px;width:79px;height:24px;background:#ffffff;overflow:hidden;"><div style="position:absolute;left:3px;top:5px;font-size:12.5px;color:#000;white-space:nowrap;">20N60-</div></div>
<div style="position:absolute;left:1305px;top:651px;width:79px;height:24px;background:#f5feff;overflow:hidden;"><div style="position:absolute;left:3px;top:5px;font-size:12.5px;color:#000;white-space:nowrap;">CS20N60</div></div>
<div style="position:absolute;left:1305px;top:676px;width:79px;height:39px;background:#ffffff;overflow:hidden;"><div style="position:absolute;left:3px;top:2px;font-size:12.5px;line-height:19px;color:#000;">FGP20N60U<br>D</div></div>
<div style="position:absolute;left:1305px;top:716px;width:79px;height:24px;background:#f5feff;overflow:hidden;"><div style="position:absolute;left:3px;top:5px;font-size:12.5px;color:#000;white-space:nowrap;">65F6190</div></div>
<div style="position:absolute;left:1305px;top:741px;width:79px;height:24px;background:#ffffff;overflow:hidden;"><div style="position:absolute;left:3px;top:5px;font-size:12.5px;color:#000;white-space:nowrap;">FCA20N60</div></div>
<div style="position:absolute;left:1305px;top:766px;width:79px;height:24px;background:#f5feff;overflow:hidden;"><div style="position:absolute;left:3px;top:5px;font-size:12.5px;color:#000;white-space:nowrap;">20N60</div></div>
<div style="position:absolute;left:1305px;top:791px;width:79px;height:24px;background:#ffffff;overflow:hidden;"><div style="position:absolute;left:3px;top:5px;font-size:12.5px;color:#000;white-space:nowrap;">20N65</div></div>
<div style="position:absolute;left:1305px;top:816px;width:79px;height:24px;background:#f5feff;overflow:hidden;"><div style="position:absolute;left:3px;top:5px;font-size:12.5px;color:#000;white-space:nowrap;">20N60</div></div>
<div style="position:absolute;left:1305px;top:841px;width:79px;height:24px;background:#ffffff;overflow:hidden;"><div style="position:absolute;left:3px;top:5px;font-size:12.5px;color:#000;white-space:nowrap;">FCA20N60F</div></div>
<div style="position:absolute;left:1385px;top:577px;width:175px;height:23px;background:#f0f0f0;color:#14147a;font-size:12px;line-height:25px;-webkit-text-stroke:0.2px;"><div style="position:absolute;left:57px;top:0;white-space:nowrap;"><i>产</i><i>品</i><i>封</i><i>装</i></div></div>
<div style="position:absolute;left:1385px;top:601px;width:175px;height:24px;background:#bdf7d7;overflow:hidden;"><div style="position:absolute;left:3px;top:5px;font-size:12.5px;color:#000;white-space:nowrap;">TO-220F</div></div>
<div style="position:absolute;left:1385px;top:626px;width:175px;height:24px;background:#ffffff;overflow:hidden;"><div style="position:absolute;left:3px;top:5px;font-size:12.5px;color:#000;white-space:nowrap;">TO-262/263</div></div>
<div style="position:absolute;left:1385px;top:651px;width:175px;height:24px;background:#f5feff;overflow:hidden;"><div style="position:absolute;left:3px;top:5px;font-size:12.5px;color:#000;white-space:nowrap;">TO-220</div></div>
<div style="position:absolute;left:1385px;top:676px;width:175px;height:39px;background:#ffffff;overflow:hidden;"><div style="position:absolute;left:3px;top:12px;font-size:12.5px;color:#000;white-space:nowrap;">TO-220</div></div>
<div style="position:absolute;left:1385px;top:716px;width:175px;height:24px;background:#f5feff;overflow:hidden;"><div style="position:absolute;left:3px;top:5px;font-size:12.5px;color:#000;white-space:nowrap;">TO-220F</div></div>
<div style="position:absolute;left:1385px;top:741px;width:175px;height:24px;background:#ffffff;overflow:hidden;"><div style="position:absolute;left:3px;top:5px;font-size:12.5px;color:#000;white-space:nowrap;">TO-3P</div></div>
<div style="position:absolute;left:1385px;top:766px;width:175px;height:24px;background:#f5feff;overflow:hidden;"><div style="position:absolute;left:3px;top:5px;font-size:12.5px;color:#000;white-space:nowrap;">TO-220/220F</div></div>
<div style="position:absolute;left:1385px;top:791px;width:175px;height:24px;background:#ffffff;overflow:hidden;"><div style="position:absolute;left:3px;top:5px;font-size:12.5px;color:#000;white-space:nowrap;">TO-220/220F</div></div>
<div style="position:absolute;left:1385px;top:816px;width:175px;height:24px;background:#f5feff;overflow:hidden;"><div style="position:absolute;left:3px;top:5px;font-size:12.5px;color:#000;white-space:nowrap;">TO-247/3P</div></div>
<div style="position:absolute;left:1385px;top:841px;width:175px;height:24px;background:#ffffff;overflow:hidden;"><div style="position:absolute;left:3px;top:5px;font-size:12.5px;color:#000;white-space:nowrap;">TO-3P</div></div>
<div style="position:absolute;left:997px;top:600px;width:47px;height:242px;border:3.5px solid #e0201c;border-radius:3px;"></div>
</body></html>
